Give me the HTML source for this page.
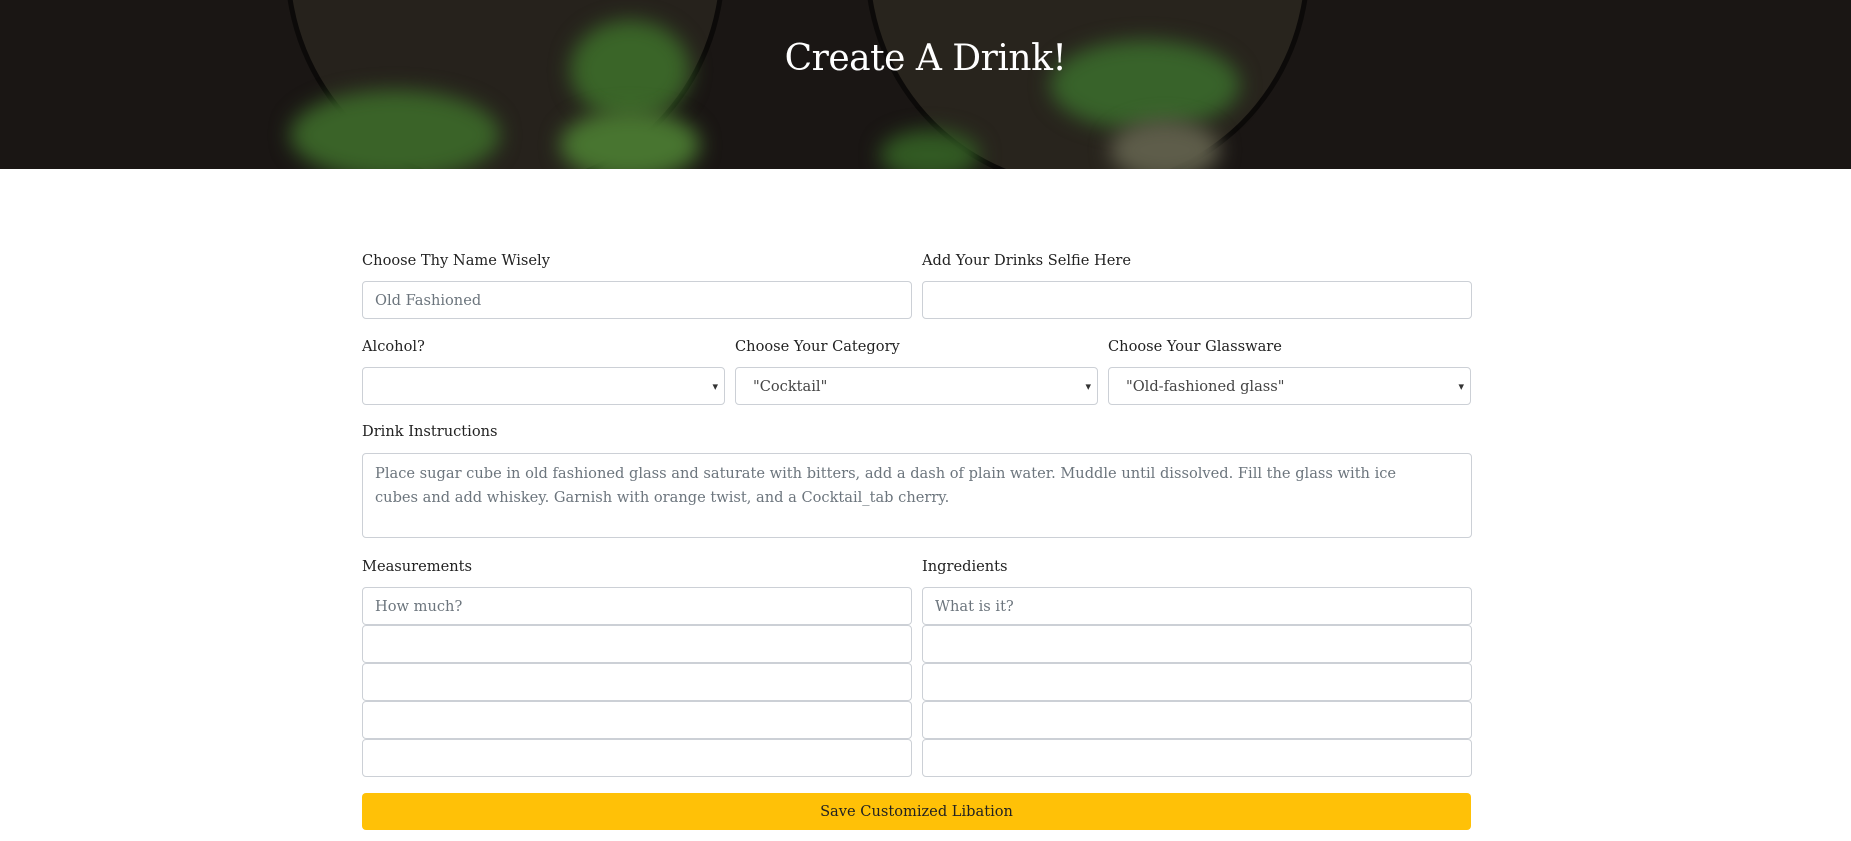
<!DOCTYPE html>
<html><head><meta charset="utf-8"><style>
*{box-sizing:border-box;margin:0;padding:0}
body{width:1851px;height:841px;background:#fff;font-family:"DejaVu Serif","Liberation Serif",serif;color:#222;position:relative;overflow:hidden}
.hero{position:absolute;left:0;top:0;width:1851px;height:169px;background:#1a1614;overflow:hidden}
.g{position:absolute;border-radius:50%;border:5px solid #0c0a09}
.m{position:absolute;border-radius:50%;filter:blur(10px)}
h1{position:absolute;left:0;width:1851px;top:38px;text-align:center;color:#fff;font-weight:normal;font-size:36px;letter-spacing:-0.5px}
.l{position:absolute;font-size:14.6px;color:#222}
.i{position:absolute;border:1px solid #ccd0d6;border-radius:4px;background:#fff;font-size:14.6px;color:#6c757d;padding:0 12px;display:flex;align-items:center}
.s{color:#444}
.s:after{content:"▾";position:absolute;right:6px;font-size:11px;color:#333}
.b{position:absolute;left:362px;top:793px;width:1109px;height:37px;background:#ffc107;border-radius:4px;font-size:14.6px;color:#222;display:flex;align-items:center;justify-content:center}
</style></head><body>
<div class="hero">
<div class="g" style="left:285px;top:-260px;width:440px;height:450px;background:#26221c"></div>
<div class="g" style="left:865px;top:-260px;width:445px;height:450px;background:#28241d"></div>
<div class="m" style="left:290px;top:90px;width:210px;height:90px;background:#3a6328"></div>
<div class="m" style="left:570px;top:20px;width:120px;height:100px;background:#3a6528"></div>
<div class="m" style="left:560px;top:110px;width:140px;height:70px;background:#487530"></div>
<div class="m" style="left:1050px;top:40px;width:190px;height:90px;background:#38632a"></div>
<div class="m" style="left:880px;top:130px;width:100px;height:50px;background:#325a23"></div>
<div class="m" style="left:1110px;top:120px;width:110px;height:60px;background:#5e5d4a"></div>
<h1>Create A Drink!</h1>
</div>
<div class="l" style="left:362px;top:252px">Choose Thy Name Wisely</div>
<div class="l" style="left:922px;top:252px">Add Your Drinks Selfie Here</div>
<div class="i" style="left:362px;top:281px;width:550px;height:38px">Old Fashioned</div>
<div class="i" style="left:922px;top:281px;width:550px;height:38px"></div>
<div class="l" style="left:362px;top:338px">Alcohol?</div>
<div class="l" style="left:735px;top:338px">Choose Your Category</div>
<div class="l" style="left:1108px;top:338px">Choose Your Glassware</div>
<div class="i s" style="left:362px;top:367px;width:363px;height:38px"></div>
<div class="i s" style="left:735px;top:367px;width:363px;height:38px;padding-left:17px">"Cocktail"</div>
<div class="i s" style="left:1108px;top:367px;width:363px;height:38px;padding-left:17px">"Old-fashioned glass"</div>
<div class="l" style="left:362px;top:423px">Drink Instructions</div>
<div class="i" style="left:362px;top:453px;width:1110px;height:85px;align-items:flex-start;padding-top:8px;line-height:24px;display:block">Place sugar cube in old fashioned glass and saturate with bitters, add a dash of plain water. Muddle until dissolved. Fill the glass with ice<br>cubes and add whiskey. Garnish with orange twist, and a Cocktail_tab cherry.</div>
<div class="l" style="left:362px;top:558px">Measurements</div>
<div class="l" style="left:922px;top:558px">Ingredients</div>
<div class="i" style="left:362px;top:587px;width:550px;height:38px">How much?</div>
<div class="i" style="left:922px;top:587px;width:550px;height:38px">What is it?</div>
<div class="i" style="left:362px;top:625px;width:550px;height:38px"></div>
<div class="i" style="left:922px;top:625px;width:550px;height:38px"></div>
<div class="i" style="left:362px;top:663px;width:550px;height:38px"></div>
<div class="i" style="left:922px;top:663px;width:550px;height:38px"></div>
<div class="i" style="left:362px;top:701px;width:550px;height:38px"></div>
<div class="i" style="left:922px;top:701px;width:550px;height:38px"></div>
<div class="i" style="left:362px;top:739px;width:550px;height:38px"></div>
<div class="i" style="left:922px;top:739px;width:550px;height:38px"></div>
<div class="b">Save Customized Libation</div>
</body></html>
